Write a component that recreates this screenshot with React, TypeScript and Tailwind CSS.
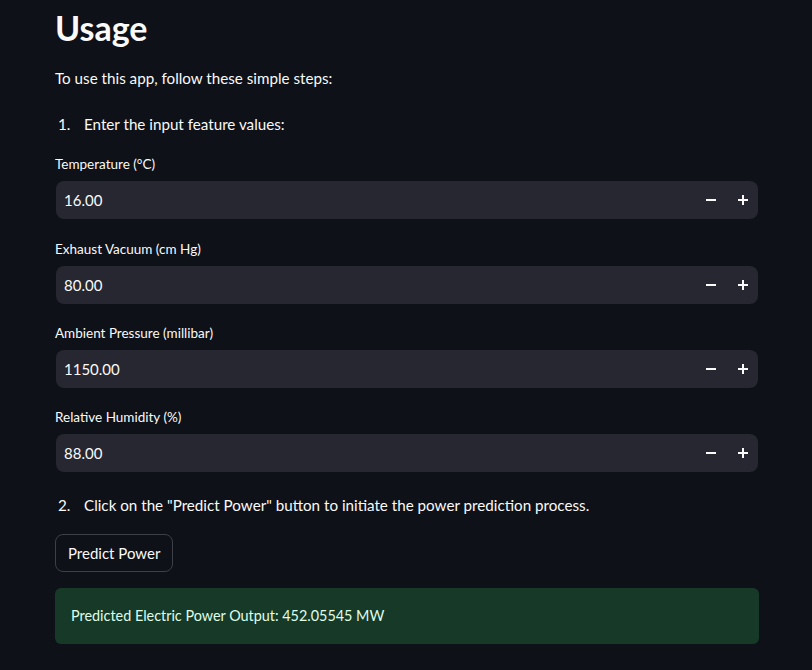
import React from "react";

// champs du formulaire
const fields = [
  { label: "Temperature (°C)", value: "16.00" },
  { label: "Exhaust Vacuum (cm Hg)", value: "80.00" },
  { label: "Ambient Pressure (millibar)", value: "1150.00" },
  { label: "Relative Humidity (%)", value: "88.00" },
];

function NumberInput({ label, value, first }: { label: string; value: string; first: boolean }) {
  return (
    <div className={first ? "mb-[20px]" : "mb-[19px]"}>
      <div className="text-[13.5px] leading-[20px] mb-[7px] text-[#fafafa]">{label}</div>
      <div className="h-[38px] w-[702px] ml-[1px] rounded-[8px] bg-[#262730] flex items-center">
        <span className="flex-1 pl-[8px] text-[15px] text-[#fafafa]">{value}</span>
        <div className="flex items-center h-full">
          <button className="w-[33px] h-full flex items-center justify-center">
            <svg width="10" height="10" viewBox="0 0 10 10">
              <line x1="0" y1="5" x2="10" y2="5" stroke="#fafafa" strokeWidth="2" />
            </svg>
          </button>
          <button className="w-[31px] h-full flex items-center justify-center">
            <svg width="10" height="10" viewBox="0 0 10 10">
              <line x1="0" y1="5" x2="10" y2="5" stroke="#fafafa" strokeWidth="2" />
              <line x1="5" y1="0" x2="5" y2="10" stroke="#fafafa" strokeWidth="2" />
            </svg>
          </button>
        </div>
      </div>
    </div>
  );
}

export default function App() {
  return (
    <div
      className="min-h-[670px] w-full bg-[#0e1117] text-[#fafafa] pl-[55px]"
      style={{ fontFamily: '"Source Sans Pro", Lato, "Liberation Sans", sans-serif' }}
    >
      <div className="w-[704px]">
        <h1 className="pt-[6px] text-[34px] leading-[44px] font-bold">Usage</h1>

        <p className="mt-[16px] text-[15.2px] leading-[24px]">To use this app, follow these simple steps:</p>

        <div className="mt-[22px] flex text-[15.2px] leading-[24px]">
          <span className="w-[29px] pl-[3px]">1.</span>
          <span>Enter the input feature values:</span>
        </div>

        <div className="mt-[18px]">
          {fields.map((f, i) => (
            <NumberInput key={f.label} label={f.label} value={f.value} first={i === 0} />
          ))}
        </div>

        <div className="mt-[21px] flex text-[15.2px] leading-[24px]">
          <span className="w-[29px] pl-[3px]">2.</span>
          <span>Click on the "Predict Power" button to initiate the power prediction process.</span>
        </div>

        <button className="mt-[17px] h-[38px] px-[12px] rounded-[8px] border border-[#3d4047] bg-[#0e1117] text-[15px] text-[#fafafa]">
          Predict Power
        </button>

        <div className="mt-[16px] h-[56px] rounded-[6px] bg-[#173a28] flex items-center px-[16px] text-[14.4px] text-[#dffde9]">
          Predicted Electric Power Output: 452.05545 MW
        </div>
      </div>
    </div>
  );
}
